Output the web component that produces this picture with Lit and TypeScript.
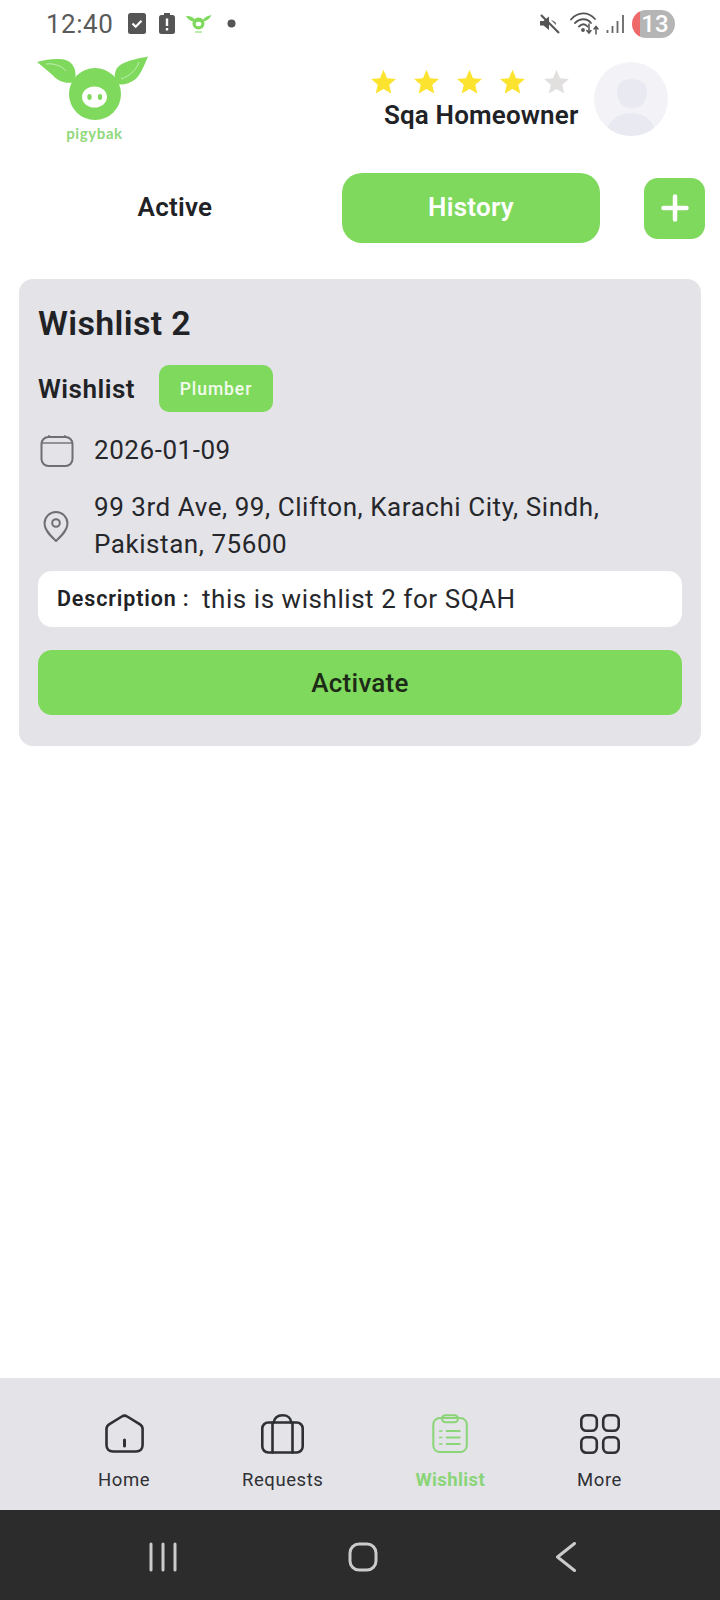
import { LitElement, html, css, svg } from "lit";
import { customElement } from "lit/decorators.js";

const GREEN = "#7fd95c";
const greenCss = css`#7fd95c`;

const star = (fill: string) => html`<svg class="star" viewBox="0 0 24 24"><path fill=${fill} d="M12 .8l3.3 7.7 8.2.7-6.2 5.4 1.9 8.1L12 18.4l-7.2 4.3 1.9-8.1L.5 9.2l8.2-.7z"/></svg>`;

const navItems = [
  { label: "Home", active: false, box: "0 0 39 40", icon: svg`<path d="M1.500 15c0-2 .8-3.400 2.600-4.600L16.800 2.500c1.800-1.200 3.600-1.200 5.400 0L35 10.400c1.800 1.200 2.600 2.600 2.600 4.600V31c0 4-2.600 6.500-6.500 6.500H8c-3.900 0-6.500-2.500-6.500-6.500z"/><path d="M19.500 26v6" stroke-width="3"/>` },
  { label: "Requests", active: false, box: "0 0 43 40", icon: svg`<rect x="1.300" y="8.500" width="40.400" height="30" rx="6"/><path d="M11.500 8.500v30M31.500 8.500v30M13 8.500C13 4 16.500 1.300 21.500 1.300S30 4 30 8.500"/>` },
  { label: "Wishlist", active: true, box: "0 0 36 40", icon: svg`<rect x="1.300" y="4" width="33.500" height="34" rx="6.500"/><rect x="10" y="1.300" width="16" height="7" rx="3.500"/><path d="M14.700 17h13M14.700 23.500h13M14.700 30h13"/><path d="M7.500 17h2.500M7.500 23.500h2.500M7.500 30h2.500" stroke-width="1.300"/>` },
  { label: "More", active: false, box: "0 0 40 40", icon: svg`<rect x="1.300" y="1.300" width="15.500" height="15.500" rx="5"/><rect x="23.200" y="1.300" width="15.500" height="15.500" rx="5"/><rect x="1.300" y="23.200" width="15.500" height="15.500" rx="5"/><rect x="23.200" y="23.200" width="15.500" height="15.500" rx="5"/>` },
];

@customElement("app-root")
export class AppRoot extends LitElement {
  static styles = css`
    :host { display: block; width: 720px; height: 1600px; background: #fff; font-family: Roboto, "Liberation Sans", sans-serif; color: #212226; }
    .page { height: 1600px; display: flex; flex-direction: column; }

    .status { height: 47px; display: flex; align-items: center; padding: 0 45px 0 46px; color: #5a5a5a; flex: none; }
    .time { font-size: 26px; letter-spacing: 0.5px; width: 66px; margin-right: 16px; }
    .status-left { display: flex; align-items: center; }
    .status-right { margin-left: auto; display: flex; align-items: center; }
    .batt { margin-left: 13px; }
    .mini { margin-left: 11px; }
    .dot { margin-left: 15px; }
    .wifi { margin-left: 10px; }
    .bars { margin-left: 6px; }
    .badge { width: 43px; height: 28px; border-radius: 14px; background: linear-gradient(90deg, #ee6a6a 0 8px, #b5b5b5 8px); color: #fff; font-size: 24px; font-weight: 500; display: flex; align-items: center; justify-content: center; padding-left: 3px; box-sizing: border-box; margin-left: 7px; }

    .header { height: 100px; flex: none; display: flex; align-items: flex-start; padding: 7px 52px 0 36px; box-sizing: border-box; }
    .logo { width: 114px; height: 92px; display: block; flex: none; }
    .who { margin-left: auto; display: flex; flex-direction: column; align-items: flex-start; width: 210px; padding-top: 15px; }
    .stars { display: flex; gap: 16.300px; height: 26px; margin-left: -14.500px; }
    .star { width: 27px; height: 26px; display: block; }
    .name { font-size: 26px; font-weight: 600; line-height: 30px; margin-top: 5px; white-space: nowrap; letter-spacing: 0.15px; }
    .avatar { width: 74px; height: 74px; border-radius: 50%; overflow: hidden; flex: none; margin-top: 8px; }
    .avatar svg { display: block; }

    .tabs { flex: none; height: 70px; margin-top: 26px; display: flex; align-items: center; padding-left: 19px; }
    .tab { width: 312px; text-align: center; font-size: 26px; font-weight: 600; letter-spacing: 0.25px; padding-bottom: 2px; }
    .tab-on { width: 258px; height: 70px; margin-left: 11px; border-radius: 20px; background: ${greenCss}; color: #fff; display: flex; align-items: center; justify-content: center; font-size: 26px; font-weight: 600; letter-spacing: 0.25px; padding-bottom: 2px; box-sizing: border-box; }
    .add { width: 61px; height: 61px; margin-left: 44px; border-radius: 14px; background: ${greenCss}; display: flex; align-items: center; justify-content: center; }

    .card { flex: none; margin: 36px 19px 0; height: 467px; box-sizing: border-box; background: #e3e3e8; border-radius: 14px; padding: 23px 19px 0; }
    .title { font-size: 34px; font-weight: 600; line-height: 42px; letter-spacing: 0.35px; }
    .kind { display: flex; align-items: center; margin-top: 21px; height: 47px; }
    .kind-label { font-size: 26px; font-weight: 600; width: 121px; letter-spacing: 0.5px; }
    .chip { width: 114px; height: 47px; border-radius: 10px; background: ${greenCss}; color: #f2fbee; font-size: 17.500px; font-weight: 500; letter-spacing: 0.95px; display: flex; align-items: center; justify-content: center; }
    .row { display: flex; align-items: center; font-size: 26px; letter-spacing: 0.55px; line-height: 37px; color: #26272b; }
    .row-icon { width: 54px; flex: none; display: flex; }
    .date { margin-top: 20px; padding-left: 2px; }
    .addr { margin-top: 20px; }
    .addr .row-icon { width: 56px; padding-left: 5px; box-sizing: border-box; }
    .desc { display: flex; align-items: center; height: 56px; margin-top: 8px; background: #fff; border-radius: 14px; padding-left: 19px; }
    .desc b { font-size: 21.500px; font-weight: 600; letter-spacing: 0.85px; width: 145px; flex: none; margin-bottom: 2px; white-space: nowrap; }
    .desc span { font-size: 26px; letter-spacing: 0.55px; color: #26272b; }
    .go { height: 65px; margin-top: 23px; border-radius: 14px; background: ${greenCss}; display: flex; align-items: center; justify-content: center; font-size: 26px; font-weight: 500; letter-spacing: 0.25px; color: #1d2a18; }

    .spacer { flex: 1; }

    .nav { flex: none; height: 132px; background: #e3e3e8; display: flex; justify-content: space-evenly; align-items: flex-start; padding: 36px 6px 0; box-sizing: border-box; }
    .nav-item { display: flex; flex-direction: column; align-items: center; font-size: 18.500px; letter-spacing: 0.55px; color: #2f3034; }
    .nav-item svg { height: 40px; display: block; fill: none; stroke: #2f3034; stroke-width: 2.600; stroke-linecap: round; stroke-linejoin: round; }
    .nav-item span { margin-top: 15px; line-height: 22px; }
    .nav-item.on { color: #8ad577; font-weight: 700; letter-spacing: 0.4px; }
    .nav-item.on svg { stroke: #8ad577; stroke-width: 2; }

    .sys { flex: none; height: 90px; background: #2c2c2c; display: flex; align-items: center; justify-content: space-between; padding: 4px 142px 0 148px; box-sizing: border-box; }
    .sys svg { display: block; fill: none; stroke: #cbcbcb; stroke-width: 3; stroke-linecap: round; stroke-linejoin: round; }
  `;

  private logo() {
    return html`<svg class="logo" viewBox="0 0 114 92">
      <path fill=${GREEN} d="M1 8C12 5 24 4 31 6.500c6 2.500 8.500 8.500 8.500 14 0 3-1 6-3 8-8 1.500-15-2-20-7.500C11 16 6 12 1 8z"/>
      <path fill=${GREEN} d="M112 2.500c-4 9-7 18-13 23-5 4-13 6-18 4.500-3-4-3-11 0-16 6-7 19-9 31-11.500z"/>
      <path fill="none" stroke="#c3eeb2" stroke-width="1" d="M10 10c8-1 16 2 20 7M103 8c-2 6-8 14-18 17"/>
      <circle cx="59" cy="40" r="26" fill=${GREEN}/>
      <ellipse cx="58.500" cy="43" rx="12.500" ry="10.500" fill="#fff"/>
      <ellipse cx="53.500" cy="43" rx="2.200" ry="3" fill=${GREEN}/>
      <ellipse cx="64" cy="43" rx="2.200" ry="3" fill=${GREEN}/>
      <text x="58.500" y="85" text-anchor="middle" font-family="Lato, sans-serif" font-weight="700" font-size="15" letter-spacing="0.6" fill="#8fd87c">pigybak</text>
    </svg>`;
  }

  render() {
    return html`<div class="page">
      <div class="status">
        <div class="status-left">
          <span class="time">12:40</span>
          <svg width="18" height="21" viewBox="0 0 18 21"><rect width="18" height="21" rx="2.500" fill="#555"/><path d="M4.500 10.500l3.200 3.200 5.800-6" fill="none" stroke="#fff" stroke-width="2.200"/></svg>
          <svg class="batt" width="16" height="21" viewBox="0 0 16 21"><path fill="#555" d="M5 0h6v2h2.500A2.500 2.500 0 0 1 16 4.500V18.500A2.500 2.500 0 0 1 13.500 21h-11A2.500 2.500 0 0 1 0 18.500V4.500A2.500 2.500 0 0 1 2.500 2H5z"/><path stroke="#fff" stroke-width="2.400" d="M8 5.500v7.500M8 15v2.500"/></svg>
          <svg class="mini" width="26" height="20" viewBox="0 0 26 20"><path fill=${GREEN} d="M0 2c4-.5 8 1 9.500 5-4 1.500-7.500-1.500-9.500-5zM25.500 1c-2 4-4.500 6-8.500 6.500 0-4 4-5.500 8.500-6.500z"/><circle cx="12.500" cy="9.500" r="6" fill=${GREEN}/><ellipse cx="12.500" cy="10" rx="2.800" ry="2.200" fill="#fff"/><path stroke=${GREEN} stroke-width="1" d="M9 18h7"/></svg>
          <svg class="dot" width="9" height="9" viewBox="0 0 9 9"><circle cx="4.500" cy="4.500" r="4" fill="#555"/></svg>
        </div>
        <div class="status-right">
          <svg width="21" height="20" viewBox="0 0 21 20"><path fill="#555" d="M1 7h3.500L10 2.500V16l-5.500-4.500H1z"/><path fill="#555" d="M12 6l5 5v-1c0-2-2-3-5-4z"/><path stroke="#555" stroke-width="2.200" d="M2 1l18 18"/></svg>
          <svg class="wifi" width="30" height="23" viewBox="0 0 30 23" fill="none" stroke="#555" stroke-width="1.800" stroke-linecap="round"><path d="M1 7.500C8-.5 18-.5 25 7M5 11c5-5 12-5 16 0M9 14.500c3-3 6-3 8.500 0"/><circle cx="13" cy="18" r="1" fill="#555"/><path d="M19 12v9M16.800 18.500L19 21l2-2.500M26 22v-7M24 17l2-2.500 2 2.500" stroke-width="1.500"/></svg>
          <svg class="bars" width="19" height="20" viewBox="0 0 19 20" fill="none" stroke="#666" stroke-width="1.800"><path d="M1.500 19v-3M6.500 19v-7M11.500 19V7M17 19V1"/></svg>
          <div class="badge">13</div>
        </div>
      </div>

      <div class="header">
        ${this.logo()}
        <div class="who">
          <div class="stars">${[0, 1, 2, 3].map(() => star("#fce32f"))}${star("#e2dfdf")}</div>
          <div class="name">Sqa Homeowner</div>
        </div>
        <div class="avatar">
          <svg width="74" height="74" viewBox="0 0 74 74"><rect width="74" height="74" fill="#f3f3f7"/><path fill="#e9eaf1" d="M23 29c0-8 5-12 14-12s16 4 16 12c0 5-1 8-4 13-2 3-6 4-11 4s-9-1-11-4c-3-5-4-8-4-13z"/><ellipse cx="37" cy="70" rx="24" ry="19" fill="#e9eaf1"/></svg>
        </div>
      </div>

      <div class="tabs">
        <div class="tab">Active</div>
        <div class="tab-on">History</div>
        <div class="add"><svg width="30" height="30" viewBox="0 0 30 30"><path d="M15 3.500v23M3.500 15h23" stroke="#fff" stroke-width="4.500" stroke-linecap="round"/></svg></div>
      </div>

      <section class="card">
        <div class="title">Wishlist 2</div>
        <div class="kind"><span class="kind-label">Wishlist</span><span class="chip">Plumber</span></div>
        <div class="row date">
          <span class="row-icon"><svg width="34" height="34" viewBox="0 0 34 34" fill="none" stroke="#6f6f72" stroke-width="2"><rect x="1.500" y="3" width="31" height="29" rx="7"/><path d="M2 9h30" stroke-width="1.400"/><path d="M9 1v2M25 1v2" stroke-width="1.400"/></svg></span>
          2026-01-09
        </div>
        <div class="row addr">
          <span class="row-icon"><svg width="26" height="31" viewBox="0 0 26 31" fill="none" stroke="#6f6f72" stroke-width="2"><path d="M13 30C8 25 1.500 19.500 1.500 12.500a11.500 11.500 0 0 1 23 0C24.500 19.500 18 25 13 30z"/><circle cx="13" cy="12" r="3.800"/></svg></span>
          <span>99 3rd Ave, 99, Clifton, Karachi City, Sindh,<br />Pakistan, 75600</span>
        </div>
        <div class="desc"><b>Description :</b><span>this is wishlist 2 for SQAH</span></div>
        <div class="go">Activate</div>
      </section>

      <div class="spacer"></div>

      <nav class="nav">
        ${navItems.map((n) => html`<div class="nav-item ${n.active ? "on" : ""}">
          <svg viewBox=${n.box}>${n.icon}</svg>
          <span>${n.label}</span>
        </div>`)}
      </nav>

      <div class="sys">
        <svg width="30" height="30" viewBox="0 0 30 30"><path d="M3 2v26M15 2v26M27 2v26"/></svg>
        <svg width="30" height="30" viewBox="0 0 30 30"><rect x="2" y="2" width="26" height="26" rx="9"/></svg>
        <svg width="30" height="30" viewBox="0 0 30 30"><path d="M26.500 1.500L9.500 15l17 13.500"/></svg>
      </div>
    </div>`;
  }
}
